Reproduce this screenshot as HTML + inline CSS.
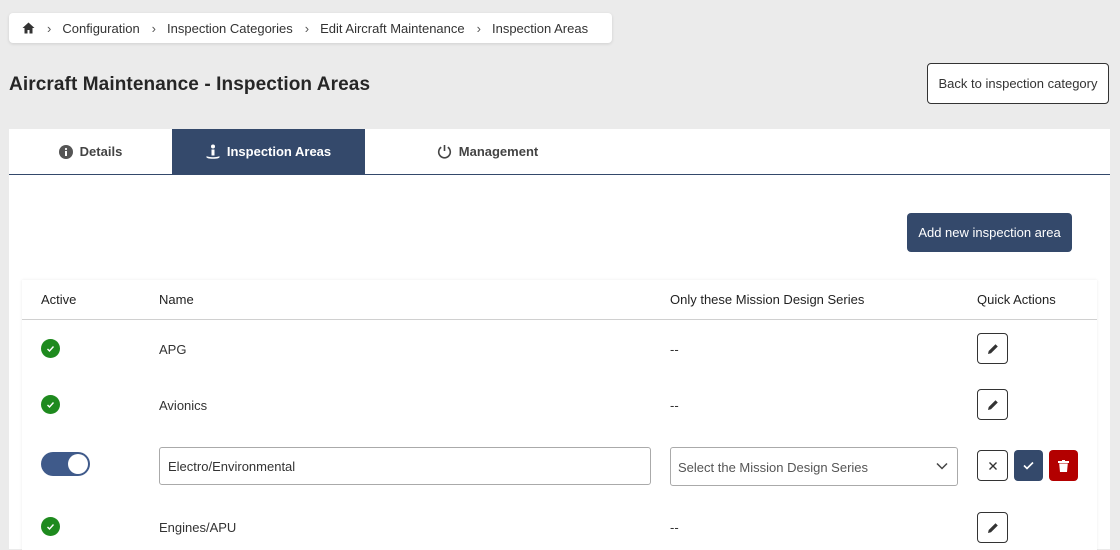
<!DOCTYPE html>
<html><head><style>
*{box-sizing:border-box;margin:0;padding:0}
body{width:1120px;height:544px;overflow:hidden;background:#ebebeb;font-family:"Liberation Sans",sans-serif;color:#333;font-size:13px;position:relative}
.a{position:absolute}
.bc{left:9px;top:13px;width:603px;height:30px;background:#fff;border-radius:4px;box-shadow:0 1px 3px rgba(0,0,0,.12);display:flex;align-items:center;padding-left:13px;font-size:13px;color:#333}
.bc .s{margin:0 11px 0 12px;font-size:13px;color:#555}
h1{position:absolute;left:9px;top:74px;font-size:19px;font-weight:bold;color:#262626;letter-spacing:0.1px}
.back{left:927px;top:63px;width:182px;height:41px;border:1px solid #333;border-radius:4px;background:#fff;display:flex;align-items:center;justify-content:center;font-size:13px;color:#333}
.card{left:9px;top:129px;width:1101px;height:420px;background:#fff}
.tabline{left:9px;top:174px;width:1101px;height:1px;background:#34496b}
.tab{top:129px;height:45px;display:flex;align-items:center;justify-content:center;font-size:13px;font-weight:bold;color:#444}
.tab svg{margin-right:7px}
.add{left:907px;top:213px;width:165px;height:39px;background:#34496b;color:#fff;border-radius:4px;display:flex;align-items:center;justify-content:center;font-size:13px}
.tbl{left:22px;top:280px;width:1075px;height:270px;background:#fff;box-shadow:0 0 3px rgba(0,0,0,.08)}
.th{top:292px;font-size:13px;color:#222}
.hl{left:22px;top:319px;width:1075px;height:1px;background:#d0d0d0}
.chk{left:41px;width:19px;height:19px;border-radius:50%;background:#1e8a1e;display:flex;align-items:center;justify-content:center}
.td{font-size:13px;color:#333}
.eb{left:977px;width:31px;height:31px;border:1px solid #333;border-radius:4px;background:#fff;display:flex;align-items:center;justify-content:center}
</style></head><body>
<div class="a bc"><svg width="13" height="12" viewBox="0 0 13 12"><path d="M6.5 0.5L0.5 6h2v5.5h3V8h2v3.5h3V6h2z" fill="#333"/></svg><span class="s">›</span>Configuration<span class="s">›</span>Inspection Categories<span class="s">›</span>Edit Aircraft Maintenance<span class="s">›</span>Inspection Areas</div>
<h1>Aircraft Maintenance - Inspection Areas</h1>
<div class="a back">Back to inspection category</div>
<div class="a card"></div>
<div class="a tab" style="left:9px;width:163px"><svg width="14" height="14" viewBox="0 0 14 14"><circle cx="7" cy="7" r="7" fill="#555"/><rect x="6" y="6" width="2" height="5" fill="#fff"/><circle cx="7" cy="4" r="1.1" fill="#fff"/></svg>Details</div>
<div class="a tab" style="left:172px;width:193px;background:#34496b;color:#fff"><svg width="14" height="16" viewBox="0 0 14 16"><circle cx="7" cy="2.5" r="2" fill="#fff"/><rect x="5.5" y="5.5" width="3" height="6" fill="#fff"/><path d="M1 12.5c0 2 12 2 12 0" stroke="#fff" stroke-width="1.6" fill="none"/></svg>Inspection Areas</div>
<div class="a tab" style="left:365px;width:245px"><svg width="15" height="15" viewBox="0 0 15 15"><path d="M4.2 3.2A5.8 5.8 0 1 0 10.8 3.2" stroke="#444" stroke-width="1.6" fill="none"/><path d="M7.5 1v6" stroke="#444" stroke-width="1.6"/></svg>Management</div>
<div class="a tabline"></div>
<div class="a add">Add new inspection area</div>
<div class="a tbl"></div>
<div class="a th" style="left:41px">Active</div>
<div class="a th" style="left:159px">Name</div>
<div class="a th" style="left:670px">Only these Mission Design Series</div>
<div class="a th" style="left:977px">Quick Actions</div>
<div class="a hl"></div>

<div class="a chk" style="top:339px"><svg width="9" height="8" viewBox="0 0 9 8"><path d="M1.5 4l2 2 4-4.5" stroke="#fff" stroke-width="1.4" fill="none"/></svg></div>
<div class="a td" style="left:159px;top:342px">APG</div>
<div class="a td" style="left:670px;top:342px">--</div>
<div class="a eb" style="top:333px"><svg width="12" height="12" viewBox="0 0 12 12"><path d="M1 11l.7-3L8.5 1.2l2.3 2.3L4 10.3z" fill="#333"/></svg></div>

<div class="a chk" style="top:395px"><svg width="9" height="8" viewBox="0 0 9 8"><path d="M1.5 4l2 2 4-4.5" stroke="#fff" stroke-width="1.4" fill="none"/></svg></div>
<div class="a td" style="left:159px;top:398px">Avionics</div>
<div class="a td" style="left:670px;top:398px">--</div>
<div class="a eb" style="top:389px"><svg width="12" height="12" viewBox="0 0 12 12"><path d="M1 11l.7-3L8.5 1.2l2.3 2.3L4 10.3z" fill="#333"/></svg></div>

<div class="a" style="left:41px;top:452px;width:49px;height:24px;border-radius:12px;background:#3f5a8a"><div class="a" style="right:2px;top:2px;width:20px;height:20px;border-radius:50%;background:#fff"></div></div>
<div class="a" style="left:159px;top:447px;width:492px;height:38px;border:1px solid #aaa;border-radius:3px;padding:11px 0 0 8px;font-size:13px;color:#333">Electro/Environmental</div>
<div class="a" style="left:670px;top:447px;width:288px;height:39px;border:1px solid #aaa;border-radius:3px;padding:12px 0 0 7px;font-size:13px;color:#555">Select the Mission Design Series<svg class="a" style="right:9px;top:14px" width="12" height="8" viewBox="0 0 12 8"><path d="M1 1.5l5 5 5-5" stroke="#444" stroke-width="1.5" fill="none"/></svg></div>
<div class="a eb" style="top:450px"><svg width="10" height="10" viewBox="0 0 10 10"><path d="M1.5 1.5l7 7M8.5 1.5l-7 7" stroke="#333" stroke-width="1.4"/></svg></div>
<div class="a" style="left:1014px;top:450px;width:29px;height:31px;border-radius:4px;background:#34496b;display:flex;align-items:center;justify-content:center"><svg width="11" height="9" viewBox="0 0 11 9"><path d="M1 4.5l3 3 6-6" stroke="#fff" stroke-width="1.6" fill="none"/></svg></div>
<div class="a" style="left:1049px;top:450px;width:29px;height:31px;border-radius:4px;background:#b30000;display:flex;align-items:center;justify-content:center"><svg width="11" height="12" viewBox="0 0 11 12"><rect x="0" y="1" width="11" height="2" fill="#fff"/><rect x="4" y="0" width="3" height="2" fill="#fff"/><path d="M1.2 3.5h8.6l-.8 8.5h-7z" fill="#fff"/></svg></div>

<div class="a chk" style="top:517px"><svg width="9" height="8" viewBox="0 0 9 8"><path d="M1.5 4l2 2 4-4.5" stroke="#fff" stroke-width="1.4" fill="none"/></svg></div>
<div class="a td" style="left:159px;top:520px">Engines/APU</div>
<div class="a td" style="left:670px;top:520px">--</div>
<div class="a eb" style="top:512px"><svg width="12" height="12" viewBox="0 0 12 12"><path d="M1 11l.7-3L8.5 1.2l2.3 2.3L4 10.3z" fill="#333"/></svg></div>
</body></html>
